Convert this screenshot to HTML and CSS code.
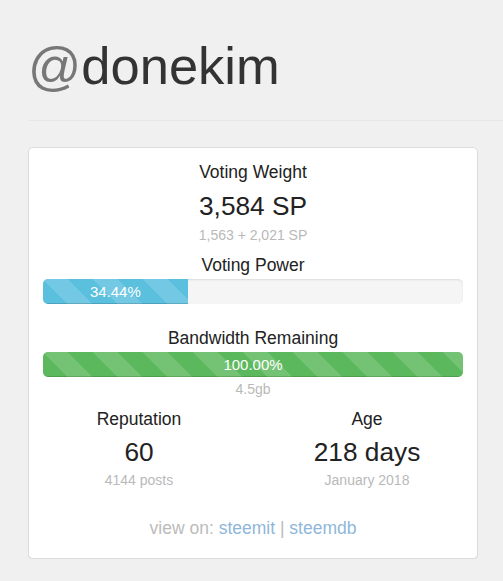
FILE: index.html
```html
<!DOCTYPE html>
<html>
<head>
<meta charset="utf-8">
<link rel="stylesheet" href="styles.css">
</head>
<body>
<div class="page">
  <h1 class="title"><span class="at">@</span>donekim</h1>
  <hr class="rule">
  <div class="card">
    <div class="label">Voting Weight</div>
    <div class="value">3,584 SP</div>
    <div class="sub">1,563 + 2,021 SP</div>
    <div class="label label-vp">Voting Power</div>
    <div class="progress progress-vp">
      <div class="bar bar-info" style="width: 34.44%">34.44%</div>
    </div>
    <div class="label label-bw">Bandwidth Remaining</div>
    <div class="progress progress-bw">
      <div class="bar bar-success" style="width: 100%">100.00%</div>
    </div>
    <div class="sub sub-bw">4.5gb</div>
    <div class="cols">
      <div class="col">
        <div class="label">Reputation</div>
        <div class="value value-col">60</div>
        <div class="sub sub-col">4144 posts</div>
      </div>
      <div class="col">
        <div class="label">Age</div>
        <div class="value value-col">218 days</div>
        <div class="sub sub-col">January 2018</div>
      </div>
    </div>
    <div class="footer">view on: <a class="link" href="#">steemit</a> | <a class="link" href="#">steemdb</a></div>
  </div>
</div>
</body>
</html>
```

FILE: styles.css
```css
html, body {
  margin: 0;
  padding: 0;
  background: #f0f0f0;
}

body {
  font-family: "Liberation Sans", Arial, Helvetica, sans-serif;
  color: #333;
  overflow: hidden;
}

.page {
  padding: 37px 0 0 28px;
}

.title {
  margin: 0;
  font-size: 52.5px;
  line-height: 57.75px;
  font-weight: 400;
  color: #333;
}

.at {
  color: #777;
}

.rule {
  margin: 25px 0 0 0;
  border: 0;
  border-top: 1px solid #e6e6e6;
  height: 0;
}

.card {
  box-sizing: border-box;
  width: 450px;
  margin-top: 26px;
  background: #fff;
  border: 1px solid #dcdcdc;
  border-radius: 5px;
  box-shadow: 0 1px 1px rgba(0, 0, 0, 0.05);
  padding: 12px 14px 17px;
  text-align: center;
}

.label {
  font-size: 17.5px;
  line-height: 25px;
  color: #222;
}

.value {
  margin-top: 6px;
  font-size: 26.25px;
  line-height: 30px;
  color: #222;
}

.sub {
  margin-top: 4px;
  font-size: 14px;
  line-height: 20px;
  color: #b9b9b9;
}

.label-vp {
  margin-top: 8px;
}

.progress {
  height: 25px;
  background: #f5f5f5;
  border-radius: 5px;
  box-shadow: inset 0 1px 2px rgba(0, 0, 0, 0.1);
  overflow: hidden;
  text-align: left;
}

.progress-vp {
  margin-top: 1px;
}

.label-bw {
  margin-top: 22px;
}

.progress-bw {
  margin-top: 1px;
}

.bar {
  height: 100%;
  font-size: 15px;
  line-height: 25px;
  color: #fff;
  text-align: center;
  box-shadow: inset 0 -1px 0 rgba(0, 0, 0, 0.15);
  background-image: linear-gradient(45deg, rgba(255, 255, 255, 0.15) 25%, transparent 25%, transparent 50%, rgba(255, 255, 255, 0.15) 50%, rgba(255, 255, 255, 0.15) 75%, transparent 75%, transparent);
  background-size: 50px 50px;
}

.bar-info {
  background-color: #5bc0de;
}

.bar-success {
  background-color: #5cb85c;
}

.sub-bw {
  margin-top: 2px;
}

.cols {
  display: grid;
  grid-template-columns: 1fr 1fr;
  margin: 8px -18px 0;
}

.value-col {
  margin-top: 5px;
}

.sub-col {
  margin-top: 3px;
}

.footer {
  margin-top: 26px;
  font-size: 17.5px;
  line-height: 25px;
  color: #bbb;
}

.link {
  color: #8fb7d9;
  text-decoration: none;
}
```
